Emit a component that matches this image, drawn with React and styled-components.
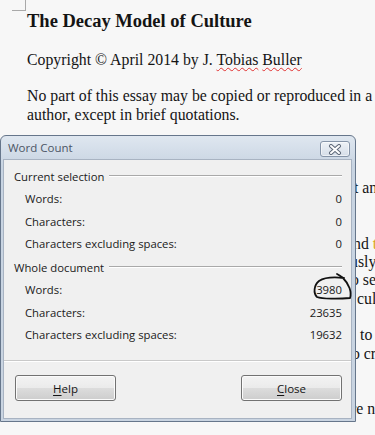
import styled, { createGlobalStyle } from 'styled-components';

const GlobalStyle = createGlobalStyle`
  html, body {
    margin: 0;
    padding: 0;
    background: #f7f7f7;
  }
`;

const Page = styled.div`
  position: relative;
  width: 375px;
  height: 435px;
  overflow: hidden;
  background: #f7f7f7;
`;

const CornerMark = styled.div`
  box-sizing: border-box;
  width: 14px;
  height: 11px;
  margin-left: 12px;
  border-right: 1px solid #a9a9a9;
  border-bottom: 1px solid #a9a9a9;
`;

const Doc = styled.div`
  padding: 0.6px 0 0 27px;
  font-family: 'Liberation Serif', 'Times New Roman', serif;
  font-size: 15.8px;
  line-height: 18.4px;
  color: #141414;
`;

const Title = styled.h1`
  margin: 0 0 20.6px;
  font-size: 18.5px;
  line-height: 18.4px;
  font-weight: bold;
`;

const Para = styled.div`
  margin-bottom: 18.4px;
`;

const Line = styled.div`
  height: 18.4px;
  white-space: nowrap;
  padding-left: ${p => p.indent || 0}px;
`;

const Misspelled = styled.span`
  text-decoration: underline wavy #e03030;
  text-decoration-thickness: 1px;
  text-underline-offset: 2px;
`;

const Gold = styled.span`
  color: #d9a520;
`;

const Dialog = styled.div`
  position: absolute;
  left: 0;
  top: 135px;
  width: 356px;
  box-sizing: border-box;
  display: flex;
  flex-direction: column;
  padding: 0 3px 2px 2px;
  border: 1px solid #66768b;
  border-radius: 6px 6px 0 0;
  background: linear-gradient(#dfe7f0, #c8d4e2 30px, #c9d4e1);
  font-family: 'Open Sans', 'Noto Sans', sans-serif;
  font-size: 11.3px;
  color: #1a1a1a;
`;

const TitleBar = styled.div`
  height: 23px;
  display: flex;
  align-items: center;
  justify-content: space-between;
  padding: 0 2px 0 5px;
`;

const TitleText = styled.span`
  font-size: 11.5px;
  color: #4c5666;
`;

const CloseX = styled.div`
  align-self: flex-start;
  margin-top: 5px;
  width: 30px;
  height: 16px;
  box-sizing: border-box;
  border: 1px solid #8594a8;
  border-radius: 3px;
  background: linear-gradient(#eef2f7, #d5dde8);
  box-shadow: inset 0 0 0 1px rgba(255, 255, 255, 0.55);
  display: flex;
  align-items: center;
  justify-content: center;
`;

const Body = styled.div`
  background: #f0f0f0;
  border: 1px solid #a8b3c2;
  padding-top: 5px;
  padding-bottom: 17px;
`;

const Group = styled.div`
  & + & {
    margin-top: 1px;
  }
`;

const GroupHeader = styled.div`
  height: 22.5px;
  display: flex;
  align-items: center;
  padding: 0 9px 0 10px;
`;

const GroupRule = styled.div`
  flex: 1;
  margin-left: 5px;
  border-top: 1px solid #a9a9a9;
  border-bottom: 1px solid #ffffff;
`;

const Row = styled.div`
  height: 22.5px;
  display: flex;
  align-items: center;
  justify-content: space-between;
  padding: 0 9px 0 21px;
`;

const Value = styled.span`
  position: relative;
`;

const Scribble = styled.svg`
  position: absolute;
  left: -6px;
  top: -10px;
  overflow: visible;
  pointer-events: none;
`;

const Separator = styled.div`
  margin: 14px 0 13px;
  border-top: 1px solid #c9c9c9;
  border-bottom: 1px solid #ffffff;
`;

const Buttons = styled.div`
  display: flex;
  justify-content: space-between;
  padding: 0 9px 0 11px;
`;

const Button = styled.div`
  width: 101px;
  height: 26px;
  box-sizing: border-box;
  border: 1px solid #727272;
  border-radius: 3px;
  background: linear-gradient(#f3f3f3 0%, #ebebeb 48%, #dcdcdc 52%, #cdcdcd 100%);
  box-shadow: inset 0 0 0 1px #fbfbfb;
  display: flex;
  align-items: center;
  justify-content: center;
  font-size: 11.5px;
  color: #151515;
`;

const Key = styled.span`
  text-decoration: underline;
  text-underline-offset: 2px;
`;

const XGlyph = () => (
  <svg width="14" height="11" viewBox="0 0 14 11">
    <path d="M3 2 L11 9 M11 2 L3 9" stroke="#5d6878" strokeWidth="4" strokeLinecap="round" />
    <path d="M3 2 L11 9 M11 2 L3 9" stroke="#ffffff" strokeWidth="2" strokeLinecap="round" />
  </svg>
);

const sections = [
  {
    name: 'Current selection',
    rows: [
      ['Words:', '0'],
      ['Characters:', '0'],
      ['Characters excluding spaces:', '0'],
    ],
  },
  {
    name: 'Whole document',
    rows: [
      ['Words:', '3980', true],
      ['Characters:', '23635'],
      ['Characters excluding spaces:', '19632'],
    ],
  },
];

export default function App() {
  return (
    <Page>
      <GlobalStyle />
      <CornerMark />
      <Doc>
        <Title>The Decay Model of Culture</Title>
        <Para>
          <Line>
            Copyright © April 2014 by J. <Misspelled>Tobias</Misspelled> <Misspelled>Buller</Misspelled>
          </Line>
        </Para>
        <Para>
          <Line>No part of this essay may be copied or reproduced in a</Line>
          <Line>author, except in brief quotations.</Line>
        </Para>
        <Para>
          <Line />
          <Line />
          <Line indent={327}>t an</Line>
        </Para>
        <Para>
          <Line />
          <Line indent={326}>nd <Gold>t</Gold></Line>
          <Line indent={323}>usly</Line>
          <Line indent={324}>o se</Line>
          <Line indent={330}>cul</Line>
        </Para>
        <Para>
          <Line indent={333}>to</Line>
          <Line indent={325}>o cr</Line>
        </Para>
        <Para>
          <Line />
          <Line indent={324}>re n</Line>
        </Para>
      </Doc>

      <Dialog>
        <TitleBar>
          <TitleText>Word Count</TitleText>
          <CloseX>
            <XGlyph />
          </CloseX>
        </TitleBar>
        <Body>
          {sections.map(section => (
            <Group key={section.name}>
              <GroupHeader>
                {section.name}
                <GroupRule />
              </GroupHeader>
              {section.rows.map(([label, value, circled]) => (
                <Row key={label}>
                  <span>{label}</span>
                  <Value>
                    {value}
                    {circled && (
                      <Scribble width="44" height="30" viewBox="0 0 44 30">
                        <path
                          d="M34 6 C25 5 15 5 9 9 C4 13 3 21 7 25 C12 27 29 27 40 26 C42 20 39 12 33 6 C31 4 29 3 27 2"
                          fill="none"
                          stroke="#111"
                          strokeWidth="1.8"
                          strokeLinecap="round"
                        />
                      </Scribble>
                    )}
                  </Value>
                </Row>
              ))}
            </Group>
          ))}
          <Separator />
          <Buttons>
            <Button>
              <span><Key>H</Key>elp</span>
            </Button>
            <Button>
              <span><Key>C</Key>lose</span>
            </Button>
          </Buttons>
        </Body>
      </Dialog>
    </Page>
  );
}
